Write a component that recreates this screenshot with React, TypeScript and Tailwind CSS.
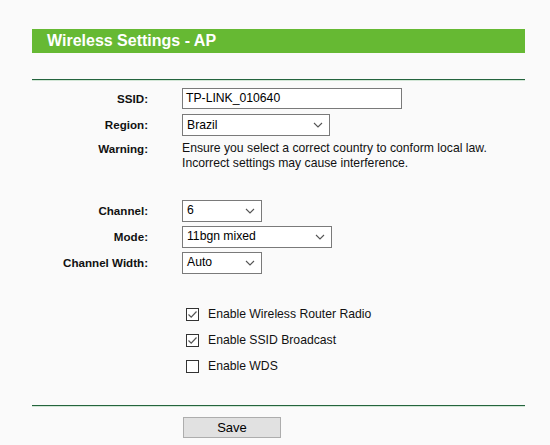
import React from "react";

const font = { fontFamily: '"Liberation Sans", Arial, sans-serif' };

function Chevron() {
  return (
    <svg width="10" height="6" viewBox="0 0 10 6" className="shrink-0">
      <path d="M1 1 L5 5 L9 1" fill="none" stroke="#555" strokeWidth="1.1" />
    </svg>
  );
}

function Select({ value, w }: { value: string; w: string }) {
  return (
    <div className={`${w} h-[22px] border border-[#7a7a7a] bg-white flex items-center justify-between pl-[4px] pr-[6px] text-[12.2px] text-black`}>
      <span>{value}</span>
      <Chevron />
    </div>
  );
}

function Label({ children }: { children: React.ReactNode }) {
  return (
    <div className="w-[116px] shrink-0 text-right font-bold text-[11.6px] text-[#111]">{children}</div>
  );
}

function Check({ checked, label }: { checked: boolean; label: string }) {
  return (
    <div className="h-[26px] flex items-center pl-[154px]">
      <div className="w-[13px] h-[13px] border border-[#333] bg-white flex items-center justify-center">
        {checked && (
          <svg width="11" height="11" viewBox="0 0 11 11">
            <path d="M1.5 5.5 L4.2 8.2 L9.5 2.5" fill="none" stroke="#555" strokeWidth="1.2" />
          </svg>
        )}
      </div>
      <span className="ml-[9px] text-[12.2px] text-[#111]">{label}</span>
    </div>
  );
}

export default function App() {
  return (
    <div className="w-[550px] h-[445px] bg-[#fafafa] overflow-hidden" style={font}>
      <div className="pt-[29px] pl-[32px] w-[525px]">
        <div className="h-[24px] bg-[#66b933] flex items-center pl-[15px]">
          <span className="text-white font-bold text-[16px] leading-none">Wireless Settings - AP</span>
        </div>
        <div className="mt-[26px] h-[1px] bg-[#24643d]" />
        <div className="h-[1px] bg-[#d2e6d6]" />

        <div className="mt-[7px] flex items-center gap-[34px] h-[21px]">
          <Label>SSID:</Label>
          <div className="w-[220px] h-[21px] border border-[#7a7a7a] bg-white flex items-center pl-[3px] text-[12.2px] text-black">
            TP-LINK_010640
          </div>
        </div>
        <div className="mt-[5px] flex items-center gap-[34px] h-[22px]">
          <Label>Region:</Label>
          <Select value="Brazil" w="w-[148px]" />
        </div>
        <div className="mt-[5px] flex gap-[34px] leading-[15px]">
          <Label>Warning:</Label>
          <div className="text-[12.2px] text-[#111]">
            Ensure you select a correct country to conform local law.
            <br />
            Incorrect settings may cause interference.
          </div>
        </div>

        <div className="mt-[29px] flex items-center gap-[34px] h-[21px]">
          <Label>Channel:</Label>
          <Select value="6" w="w-[80px]" />
        </div>
        <div className="mt-[5px] flex items-center gap-[34px] h-[21px]">
          <Label>Mode:</Label>
          <Select value="11bgn mixed" w="w-[150px]" />
        </div>
        <div className="mt-[5px] flex items-center gap-[34px] h-[21px]">
          <Label>Channel Width:</Label>
          <Select value="Auto" w="w-[80px]" />
        </div>

        <div className="mt-[28px]">
          <Check checked label="Enable Wireless Router Radio" />
          <Check checked label="Enable SSID Broadcast" />
          <Check checked={false} label="Enable WDS" />
        </div>

        <div className="mt-[26px] h-[1px] bg-[#24643d]" />
        <div className="h-[1px] bg-[#d2e6d6]" />

        <div className="mt-[8px] pl-[151px]">
          <button className="w-[98px] h-[21px] bg-[#e1e1e1] border border-[#adadad] text-[13px] text-black leading-none" style={font}>
            Save
          </button>
        </div>
      </div>
    </div>
  );
}
